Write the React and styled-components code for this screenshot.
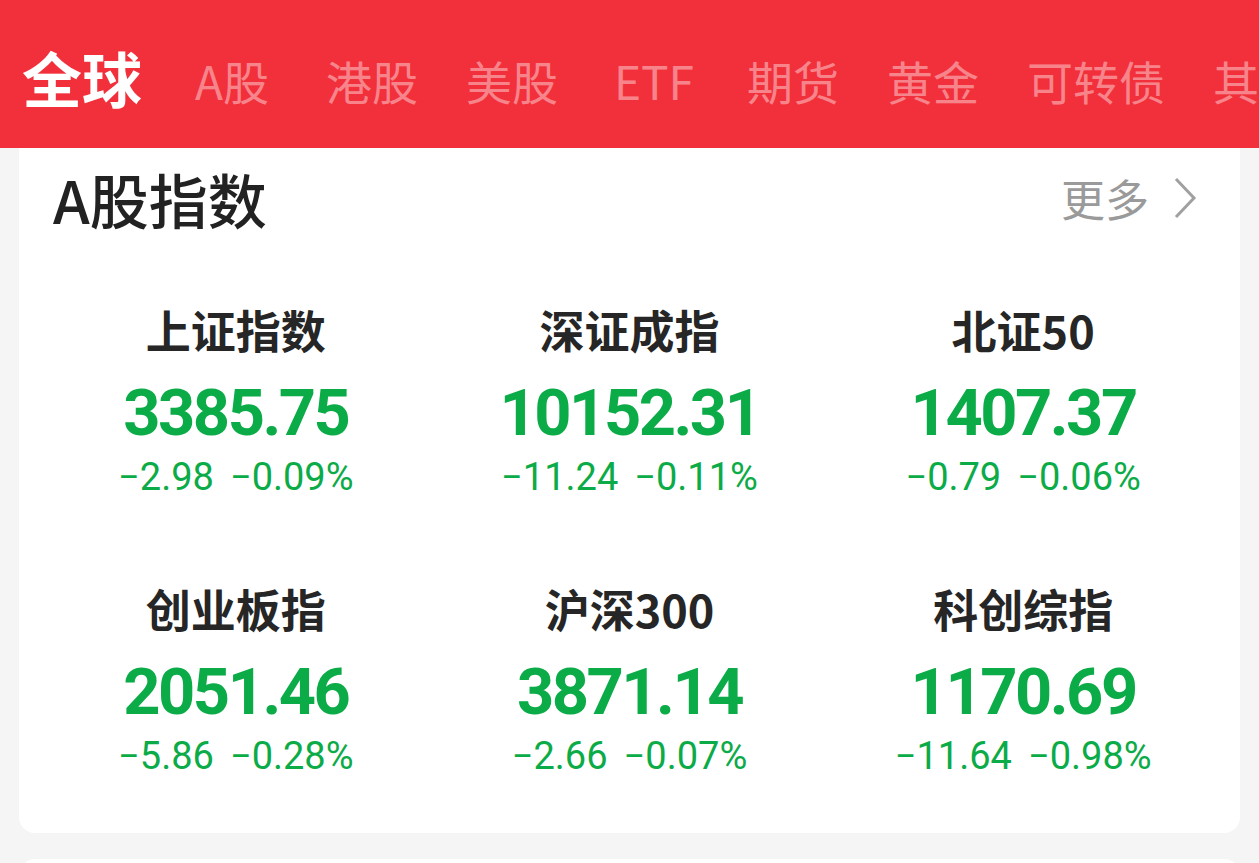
import React from "react";
import styled, { createGlobalStyle } from "styled-components";

const GlobalStyle = createGlobalStyle`
  html, body {
    margin: 0;
    padding: 0;
    background: #f5f5f5;
  }
  body {
    width: 1259px;
    height: 863px;
    overflow: hidden;
    font-family: "Noto Sans CJK SC", "Noto Sans", sans-serif;
  }
`;

// tabs with latin letters render a bit wider in the original font
const tabs = [
  { label: "全球" },
  { label: "A股", before: 5, after: 9 },
  { label: "港股" },
  { label: "美股" },
  { label: "ETF", before: 8, after: 5 },
  { label: "期货" },
  { label: "黄金" },
  { label: "可转债" },
  { label: "其他" },
];

const indices = [
  { name: "上证指数", value: "3385.75", change: "−2.98", pct: "−0.09%" },
  { name: "深证成指", value: "10152.31", change: "−11.24", pct: "−0.11%" },
  { name: "北证50", value: "1407.37", change: "−0.79", pct: "−0.06%" },
  { name: "创业板指", value: "2051.46", change: "−5.86", pct: "−0.28%" },
  { name: "沪深300", value: "3871.14", change: "−2.66", pct: "−0.07%" },
  { name: "科创综指", value: "1170.69", change: "−11.64", pct: "−0.98%" },
];

const App = () => {
  return (
    <>
      <GlobalStyle />
      <Header>
        {tabs.map((t, i) => (
          <Tab
            key={t.label}
            $active={i === 0}
            $before={t.before || 0}
            $after={t.after || 0}
          >
            {t.label}
          </Tab>
        ))}
      </Header>
      <Card>
        <CardHead>
          <CardTitle>A股指数</CardTitle>
          <More>
            更多
            <svg width="24" height="42" viewBox="0 0 24 42">
              <polyline
                points="3,2 21,21 3,40"
                fill="none"
                stroke="#a0a0a0"
                strokeWidth="3"
              />
            </svg>
          </More>
        </CardHead>
        <Grid>
          {indices.map((item) => (
            <Item key={item.name}>
              <Name>{item.name}</Name>
              <Value>{item.value}</Value>
              <Change>
                <span>{item.change}</span>
                <span>{item.pct}</span>
              </Change>
            </Item>
          ))}
        </Grid>
      </Card>
      <NextCard />
    </>
  );
};

const Header = styled.div`
  height: 148px;
  background: #f2303b;
  display: flex;
  align-items: center;
  gap: 48px;
  padding: 6px 0 0 22px;
  box-sizing: border-box;
  overflow: hidden;
  white-space: nowrap;
`;

const Tab = styled.div`
  flex-shrink: 0;
  font-size: ${(p) => (p.$active ? "60px" : "46px")};
  font-weight: ${(p) => (p.$active ? 700 : 400)};
  color: ${(p) => (p.$active ? "#ffffff" : "rgba(255, 255, 255, 0.42)")};
  line-height: 1;
  margin: ${(p) => (p.$active ? "0" : "6px")} ${(p) => p.$after}px 0
    ${(p) => p.$before}px;
`;

const Card = styled.div`
  margin: 0 19px;
  background: #ffffff;
  border-radius: 0 0 16px 16px;
  padding: 10px 20px 57px;
`;

const CardHead = styled.div`
  display: flex;
  align-items: center;
  justify-content: space-between;
  height: 80px;
  padding: 0 23px 0 14px;
`;

const CardTitle = styled.div`
  font-size: 59px;
  font-weight: 500;
  color: #222222;
`;

const More = styled.div`
  display: flex;
  align-items: center;
  gap: 24px;
  font-size: 44px;
  color: #9a9a9a;
`;

const Grid = styled.div`
  display: grid;
  grid-template-columns: repeat(3, 1fr);
  row-gap: 84px;
  margin-top: 64px;
`;

const Item = styled.div`
  display: flex;
  flex-direction: column;
  align-items: center;
`;

const Name = styled.div`
  font-size: 45px;
  font-weight: 700;
  color: #262626;
  line-height: 56px;
`;

const Value = styled.div`
  margin-top: 11px;
  font-family: Roboto, "Noto Sans", sans-serif;
  font-size: 65px;
  font-weight: 700;
  letter-spacing: -2.5px;
  color: #0bab48;
  line-height: 88px;
`;

const Change = styled.div`
  display: flex;
  gap: 16px;
  font-family: Roboto, "Noto Sans", sans-serif;
  font-size: 38px;
  color: #0bab48;
  line-height: 40px;
`;

const NextCard = styled.div`
  margin: 26px 19px 0;
  height: 40px;
  background: #ffffff;
  border-radius: 16px 16px 0 0;
`;

export default App;
